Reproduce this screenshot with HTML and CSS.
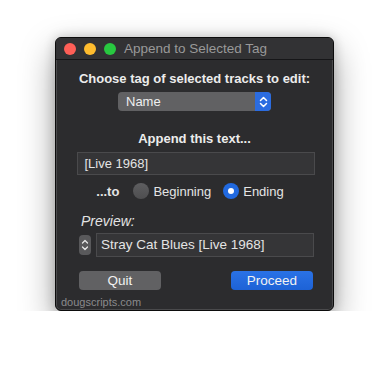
FILE: index.html
```html
<!DOCTYPE html>
<html lang="en">
<head>
    <meta charset="UTF-8">
    <meta name="viewport" content="width=device-width, initial-scale=1.0">
    <title>Append to Selected Tag</title>
    <link rel="stylesheet" href="styles.css">
</head>
<body>
    <!-- Dialog window -->
    <div class="window">
        <div class="titlebar">
            <span class="light red"></span>
            <span class="light yellow"></span>
            <span class="light green"></span>
            <span class="title">Append to Selected Tag</span>
        </div>

        <div class="content">
            <div class="label">Choose tag of selected tracks to edit:</div>
            <div class="popup">
                <span class="popup-text">Name</span>
                <span class="popup-arrows">
                    <svg width="9" height="12" viewBox="0 0 9 12">
                        <path d="M1.5 4.5 L4.5 1.5 L7.5 4.5 M1.5 7.5 L4.5 10.5 L7.5 7.5" fill="none" stroke="#fff" stroke-width="1.5" stroke-linecap="round" stroke-linejoin="round"/>
                    </svg>
                </span>
            </div>

            <div class="label label-append">Append this text...</div>
            <div class="field field-append">[Live 1968]</div>

            <div class="radios">
                <span class="radio-label">...to</span>
                <span class="radio"></span>
                <span class="radio-text">Beginning</span>
                <span class="radio radio-on"></span>
                <span class="radio-text">Ending</span>
            </div>

            <div class="preview-label">Preview:</div>
            <div class="preview-row">
                <span class="stepper">
                    <svg width="8" height="14" viewBox="0 0 8 14">
                        <path d="M1.5 5 L4 2.5 L6.5 5 M1.5 9 L4 11.5 L6.5 9" fill="none" stroke="#e8e8e8" stroke-width="1.3" stroke-linecap="round" stroke-linejoin="round"/>
                    </svg>
                </span>
                <div class="field field-preview">Stray Cat Blues [Live 1968]</div>
            </div>

            <div class="buttons">
                <button class="btn btn-quit">Quit</button>
                <button class="btn btn-proceed">Proceed</button>
            </div>

            <div class="credit">dougscripts.com</div>
        </div>
    </div>
</body>
</html>
```

FILE: styles.css
```css
body {
    margin: 0;
    padding: 37px 0 0 55px;
    background: #ffffff;
    font-family: "Liberation Sans", Arial, sans-serif;
    font-size: 13px;
    color: #e4e4e4;
}
.window {
    width: 279px;
    height: 274px;
    box-sizing: border-box;
    background: #2c2c2e;
    border: 1px solid #0c0c0c;
    border-radius: 6px;
    box-shadow: 0 14px 34px rgba(0, 0, 0, 0.38), 0 0 12px rgba(0, 0, 0, 0.2), inset 0 0 0 1px #4a4a4c;
    overflow: hidden;
    display: flex;
    flex-direction: column;
}
.titlebar {
    height: 21px;
    flex: none;
    display: flex;
    align-items: center;
    padding-left: 8px;
    background: #323234;
    border-bottom: 1px solid #161618;
}
.light {
    width: 12px;
    height: 12px;
    border-radius: 50%;
    margin-right: 8px;
}
.red { background: #fe5f57; }
.yellow { background: #febc2e; }
.green { background: #28c840; }
.title {
    margin-left: 0;
    color: #999999;
    font-size: 13.5px;
}
.content {
    flex: 1;
    display: flex;
    flex-direction: column;
    align-items: center;
}
.label {
    margin-top: 11px;
    font-weight: bold;
    line-height: 16px;
    color: #ececec;
}
.popup {
    margin-top: 5px;
    width: 153px;
    height: 19px;
    display: flex;
    background: #616163;
    border-radius: 4px;
    overflow: hidden;
}
.popup-text {
    flex: 1;
    padding-left: 8px;
    line-height: 19px;
    color: #f0f0f0;
}
.popup-arrows {
    width: 16px;
    display: flex;
    align-items: center;
    justify-content: center;
    background: #2b6ce0;
}
.label-append {
    margin-top: 20px;
}
.field {
    box-sizing: border-box;
    background: #353537;
    border: 1px solid #4a4a4c;
    color: #e4e4e4;
    padding-left: 7px;
}
.field-append {
    margin-top: 5px;
    width: 238px;
    height: 23px;
    line-height: 21px;
    margin-left: 2px;
}
.radios {
    margin: 8px 9px 0 0;
    display: flex;
    align-items: center;
    height: 16px;
}
.radio-label {
    font-weight: bold;
    margin-right: 14px;
}
.radio {
    width: 16px;
    height: 16px;
    border-radius: 50%;
    box-sizing: border-box;
    background: linear-gradient(#5e5e60, #4e4e50);
    margin-right: 4px;
}
.radio-on {
    background: #2169df;
    position: relative;
    margin-left: 12px;
}
.radio-on::after {
    content: "";
    position: absolute;
    left: 5px;
    top: 5px;
    width: 6px;
    height: 6px;
    border-radius: 50%;
    background: #ffffff;
}
.radio-text {
    color: #e4e4e4;
}
.preview-label {
    align-self: flex-start;
    margin: 14px 0 0 25px;
    font-style: italic;
    font-size: 14px;
    line-height: 16px;
    color: #e4e4e4;
}
.preview-row {
    align-self: flex-start;
    margin: 4px 0 0 23px;
    display: flex;
    align-items: center;
}
.stepper {
    width: 12px;
    height: 20px;
    border-radius: 4px;
    background: #59595b;
    display: flex;
    align-items: center;
    justify-content: center;
    margin-right: 5px;
}
.field-preview {
    width: 218px;
    height: 24px;
    line-height: 22px;
    padding-left: 4px;
    font-size: 13.5px;
}
.buttons {
    align-self: stretch;
    display: flex;
    justify-content: space-between;
    margin: 14px 20px 0 23px;
}
.btn {
    width: 82px;
    height: 19px;
    padding: 0;
    border: none;
    border-radius: 4px;
    font-family: inherit;
    font-size: 13.5px;
    color: #f2f2f2;
}
.btn-quit {
    background: #616163;
}
.btn-proceed {
    background: linear-gradient(#2a72e6, #1d62d6);
}
.credit {
    align-self: flex-start;
    margin: 6px 0 0 5px;
    font-size: 11px;
    line-height: 13px;
    color: #8a8a8c;
}
```
